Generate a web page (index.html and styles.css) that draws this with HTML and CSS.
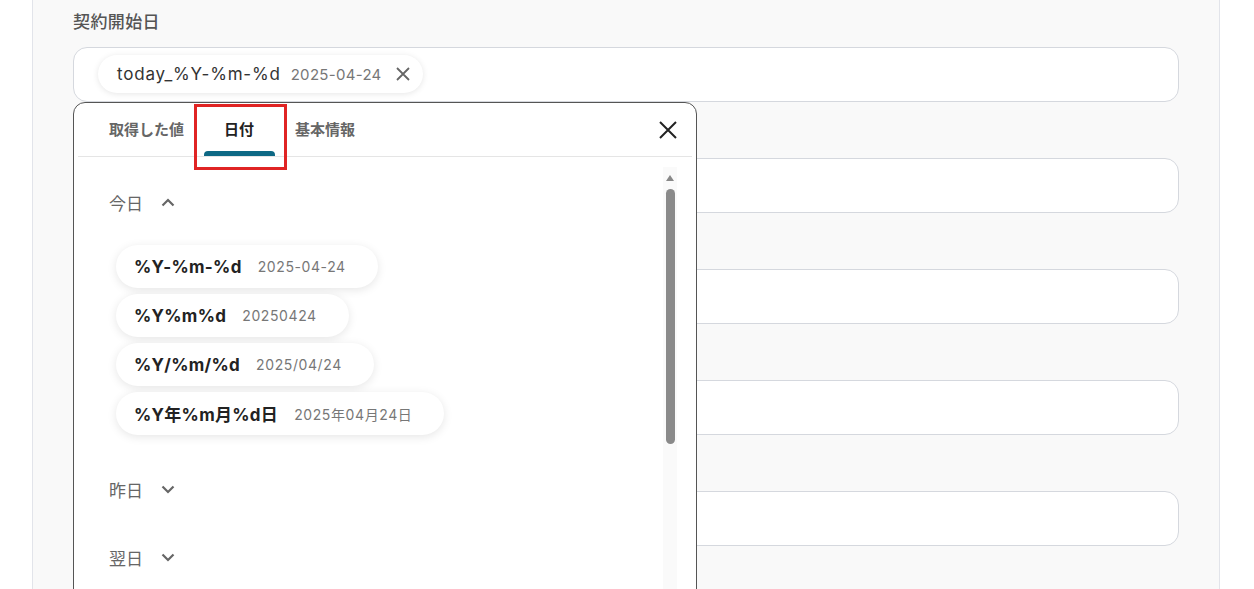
FILE: index.html
```html
<!DOCTYPE html>
<html lang="ja">
<head>
    <meta charset="UTF-8">
    <meta name="viewport" content="width=device-width, initial-scale=1.0">
    <title>契約開始日 - 日付の選択</title>
    <link rel="stylesheet" href="styles.css">
</head>
<body>
    <div class="panel">
        <div class="field-label first">契約開始日</div>
        <div class="field">
            <span class="token">
                <span class="token-key">today_%Y-%m-%d</span>
                <span class="token-val">2025-04-24</span>
                <svg class="token-x" width="14" height="14" viewBox="0 0 14 14"><path d="M1 1L13 13M13 1L1 13" stroke="#666" stroke-width="1.8" fill="none"/></svg>
            </span>
        </div>

        <!-- labels for the next fields sit under the popup -->
        <div class="field-label"></div>
        <div class="field"></div>

        <div class="field-label"></div>
        <div class="field"></div>

        <div class="field-label"></div>
        <div class="field"></div>

        <div class="field-label"></div>
        <div class="field"></div>

        <div class="popup">
            <div class="tabs">
                <div class="tab">取得した値</div>
                <div class="tab active">日付</div>
                <div class="tab">基本情報</div>
                <svg class="close" width="18" height="18" viewBox="0 0 18 18"><path d="M1 1L17 17M17 1L1 17" stroke="#222" stroke-width="2" fill="none"/></svg>
            </div>
            <div class="highlight"></div>

            <div class="body">
                <div class="list">
                    <div class="group-head">
                        <span>今日</span>
                        <svg width="14" height="9" viewBox="0 0 14 9"><path d="M1.5 7.5L7 2L12.5 7.5" stroke="#666" stroke-width="2.2" fill="none"/></svg>
                    </div>
                    <div class="chips">
                        <div class="chip"><span class="chip-key">%Y-%m-%d</span><span class="chip-val">2025-04-24</span></div>
                        <div class="chip"><span class="chip-key">%Y%m%d</span><span class="chip-val">20250424</span></div>
                        <div class="chip"><span class="chip-key">%Y/%m/%d</span><span class="chip-val">2025/04/24</span></div>
                        <div class="chip"><span class="chip-key">%Y年%m月%d日</span><span class="chip-val">2025年04月24日</span></div>
                    </div>
                    <div class="group-head">
                        <span>昨日</span>
                        <svg width="14" height="9" viewBox="0 0 14 9"><path d="M1.5 1.5L7 7L12.5 1.5" stroke="#666" stroke-width="2.2" fill="none"/></svg>
                    </div>
                    <div class="group-head">
                        <span>翌日</span>
                        <svg width="14" height="9" viewBox="0 0 14 9"><path d="M1.5 1.5L7 7L12.5 1.5" stroke="#666" stroke-width="2.2" fill="none"/></svg>
                    </div>
                </div>
                <div class="scrollbar">
                    <div class="arrow"></div>
                    <div class="thumb"></div>
                </div>
            </div>
        </div>
    </div>
</body>
</html>
```

FILE: styles.css
```css
body {
    margin: 0;
    background: #ffffff;
    font-family: "Inter", "Noto Sans CJK JP", sans-serif;
    height: 589px;
    overflow: hidden;
}
.panel {
    position: relative;
    margin-left: 32px;
    width: 1188px;
    height: 620px;
    box-sizing: border-box;
    padding: 10px 40px 0 40px;
    background: #f9f9f9;
    border-left: 1px solid #e2e4ea;
    border-right: 1px solid #e2e4ea;
}
.field-label {
    height: 24px;
    font-size: 17px;
    font-weight: 500;
    line-height: 24px;
    letter-spacing: 0.4px;
    color: #555;
    margin: 19px 0 13px;
}
.field-label.first {
    margin-top: 0;
}
.field {
    width: 1106px;
    height: 55px;
    box-sizing: border-box;
    background: #fff;
    border: 1px solid #d5d8de;
    border-radius: 14px;
    padding: 7px 24px;
}
.token {
    display: inline-flex;
    align-items: center;
    height: 38px;
    padding: 0 13px 0 19px;
    border-radius: 19px;
    background: #fff;
    box-shadow: 0 1px 6px rgba(0, 0, 0, 0.1);
}
.token-key {
    font-size: 17px;
    color: #333;
    letter-spacing: 0.8px;
}
.token-val {
    font-size: 15px;
    color: #777;
    margin-left: 10px;
    letter-spacing: 0.3px;
}
.token-x {
    margin-left: 14px;
}
.popup {
    position: absolute;
    left: 40px;
    top: 102px;
    width: 624px;
    height: 520px;
    box-sizing: border-box;
    background: #fff;
    border: 1px solid #555;
    border-radius: 12px;
    z-index: 2;
}
.tabs {
    display: flex;
    align-items: center;
    height: 53px;
    margin: 0 4px;
    padding-left: 11px;
    border-bottom: 1px solid #e5e5e5;
    position: relative;
}
.tab {
    height: 53px;
    line-height: 53px;
    padding: 0 20px;
    font-size: 15px;
    font-weight: 700;
    color: #666;
    position: relative;
    box-sizing: border-box;
}
.tab.active {
    color: #222;
    padding: 0 21px 0 20px;
}
.tab.active::after {
    content: "";
    position: absolute;
    left: 0;
    right: 0;
    bottom: 0;
    height: 5px;
    background: #0d6884;
    border-radius: 4px 4px 0 0;
}
.close {
    margin-left: auto;
    margin-right: 15px;
}
.highlight {
    position: absolute;
    left: 120px;
    top: 1px;
    width: 93px;
    height: 66px;
    box-sizing: border-box;
    border: 3px solid #e02424;
}
.body {
    display: flex;
}
.list {
    flex: 1;
    padding-top: 11px;
}
.group-head {
    display: flex;
    align-items: center;
    height: 68px;
    padding-left: 35px;
    font-size: 17px;
    color: #666;
}
.group-head svg {
    margin-left: 18px;
}
.chips {
    display: flex;
    flex-direction: column;
    align-items: flex-start;
    gap: 6px;
    margin: 9px 0 20px 42px;
}
.chip {
    display: flex;
    align-items: center;
    height: 43px;
    padding: 0 32px 0 18px;
    border-radius: 22px;
    background: #fff;
    box-shadow: 0 2px 10px rgba(0, 0, 0, 0.1);
}
.chip-key {
    font-size: 17px;
    font-weight: 700;
    color: #222;
    letter-spacing: 0.3px;
}
.chip-val {
    font-size: 14px;
    color: #777;
    margin-left: 16px;
    letter-spacing: 0.6px;
}
.scrollbar {
    width: 14px;
    margin: 10px 19px 0 0;
    background: #fafafa;
    display: flex;
    flex-direction: column;
    align-items: center;
}
.arrow {
    width: 0;
    height: 0;
    margin-top: 8px;
    border-left: 4px solid transparent;
    border-right: 4px solid transparent;
    border-bottom: 6px solid #888;
}
.thumb {
    width: 9px;
    height: 255px;
    margin-top: 8px;
    background: #8a8a8a;
    border-radius: 5px;
}
```
